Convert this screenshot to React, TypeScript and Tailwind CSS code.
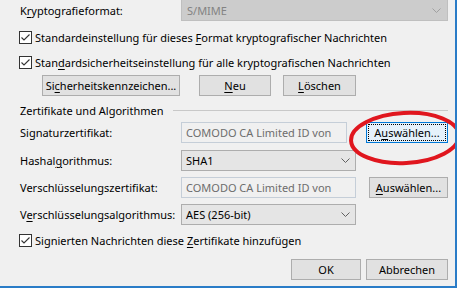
import React from 'react';

const Key: React.FC<{ children: React.ReactNode }> = ({ children }) => (
  <span className="underline decoration-1 underline-offset-2">{children}</span>
);

const CheckBox = () => (
  <span className="flex h-[13px] w-[13px] shrink-0 items-center justify-center border border-[#333333] bg-white">
    <svg width="11" height="11" viewBox="0 0 11 11">
      <path d="M1.5 5.5 L4 8 L9.5 2.5" fill="none" stroke="#333333" strokeWidth="1.1" />
    </svg>
  </span>
);

const Chevron = ({ color }: { color: string }) => (
  <svg width="9" height="5" viewBox="0 0 9 5">
    <path d="M0.5 0.5 L4.5 4.5 L8.5 0.5" fill="none" stroke={color} strokeWidth="1" />
  </svg>
);

interface BtnProps {
  children: React.ReactNode;
  className?: string;
  focused?: boolean;
}

const Btn: React.FC<BtnProps> = ({ children, className = '', focused }) => {
  if (focused) {
    return (
      <div className={`flex h-[21px] border border-[#0078d7] bg-[#e5f1fb] p-[1px] ${className}`}>
        <div className="flex flex-1 items-center justify-center border border-dotted border-black">
          {children}
        </div>
      </div>
    );
  }
  return (
    <div className={`flex h-[21px] items-center justify-center border border-[#adadad] bg-[#e1e1e1] ${className}`}>
      {children}
    </div>
  );
};

const TextBox: React.FC<{ className?: string }> = ({ className = '' }) => (
  <div className={`flex h-[21px] items-center overflow-hidden whitespace-nowrap border border-[#c5ced8] bg-[#f0f0f0] px-[4px] text-[#6d6d6d] ${className}`}>
    COMODO CA Limited ID von
  </div>
);

const Select: React.FC<{ children: React.ReactNode; className?: string }> = ({ children, className = '' }) => (
  <div className={`flex h-[21px] items-center justify-between border border-[#adadad] bg-[#e5e5e5] pl-[4px] pr-[5px] ${className}`}>
    <span>{children}</span>
    <Chevron color="#606060" />
  </div>
);

const CheckRow: React.FC<{ children: React.ReactNode; className?: string }> = ({ children, className = '' }) => (
  <div className={`flex h-[20px] items-center gap-[3px] pl-[19px] ${className}`}>
    <CheckBox />
    <span>{children}</span>
  </div>
);

export default function App() {
  return (
    <div className="relative h-[288px] w-[457px] overflow-hidden whitespace-nowrap border-r-2 border-b-2 border-[#2a7cc7] bg-[#f0f0f0] font-['Noto_Sans',sans-serif] text-[11px] leading-none text-black">
      {/* Format */}
      <div className="-mt-px flex h-[22px] items-center pl-[20px]">
        <span className="w-[161px]">
          K<Key>r</Key>yptografieformat:
        </span>
        <div className="flex h-[22px] w-[267px] items-center justify-between border border-[#bfbfbf] bg-[#cccccc] pl-[5px] pr-[6px] text-[#838383]">
          <span>S/MIME</span>
          <Chevron color="#a0a0a0" />
        </div>
      </div>

      <CheckRow className="mt-[6px]">
        Standardeinstellung für dieses <Key>F</Key>ormat kryptografischer Nachrichten
      </CheckRow>
      <CheckRow className="mt-[5px]">
        Stan<Key>d</Key>ardsicherheitseinstellung für alle kryptografischen Nachrichten
      </CheckRow>

      <div className="mt-[3px] flex pl-[42px]">
        <Btn className="w-[138px]">
          Si<Key>c</Key>herheitskennzeichen...
        </Btn>
        <Btn className="ml-[19px] w-[72px]">
          <Key>N</Key>eu
        </Btn>
        <Btn className="ml-[12px] w-[73px]">
          <Key>L</Key>öschen
        </Btn>
      </div>

      {/* Zertifikate und Algorithmen */}
      <div className="mt-[6px] flex h-[16px] items-center pl-[20px] pr-[7px]">
        <span>Zertifikate und Algorithmen</span>
        <div className="ml-[9px] h-px flex-1 bg-[#c8c8c8]" />
      </div>

      <div className="mt-[4px] flex items-center pl-[20px]">
        <span className="w-[161px]">Signaturzertifikat:</span>
        <TextBox className="w-[166px]" />
        <Btn focused className="ml-[19px] w-[82px]">
          A<Key>u</Key>swählen...
        </Btn>
      </div>

      <div className="mt-[7px] flex items-center pl-[20px]">
        <span className="w-[161px]">
          Hashal<Key>g</Key>orithmus:
        </span>
        <Select className="w-[175px]">SHA1</Select>
      </div>

      <div className="mt-[6px] flex items-center pl-[20px]">
        <span className="w-[161px]">Verschlüsselungszertifikat:</span>
        <TextBox className="w-[175px]" />
        <Btn className="ml-[13px] w-[79px]">
          <Key>A</Key>uswählen...
        </Btn>
      </div>

      <div className="mt-[6px] flex items-center pl-[20px]">
        <span className="w-[161px]">
          V<Key>e</Key>rschlüsselungsalgorithmus:
        </span>
        <Select className="w-[175px]">AES (256-bit)</Select>
      </div>

      <CheckRow className="mt-[5px]">
        Signierten Nachrichten diese <Key>Z</Key>ertifikate hinzufügen
      </CheckRow>

      <div className="mt-[9px] flex justify-end gap-[5px] pr-[7px]">
        <Btn className="w-[70px]">OK</Btn>
        <Btn className="w-[82px]">Abbrechen</Btn>
      </div>

      {/* red annotation */}
      <svg className="absolute left-[346px] top-[109px]" width="116" height="58" viewBox="0 0 116 58">
        <ellipse cx="59" cy="29" rx="54" ry="25" fill="none" stroke="#e0161e" strokeWidth="4" transform="rotate(-3 59 29)" />
      </svg>
    </div>
  );
}
